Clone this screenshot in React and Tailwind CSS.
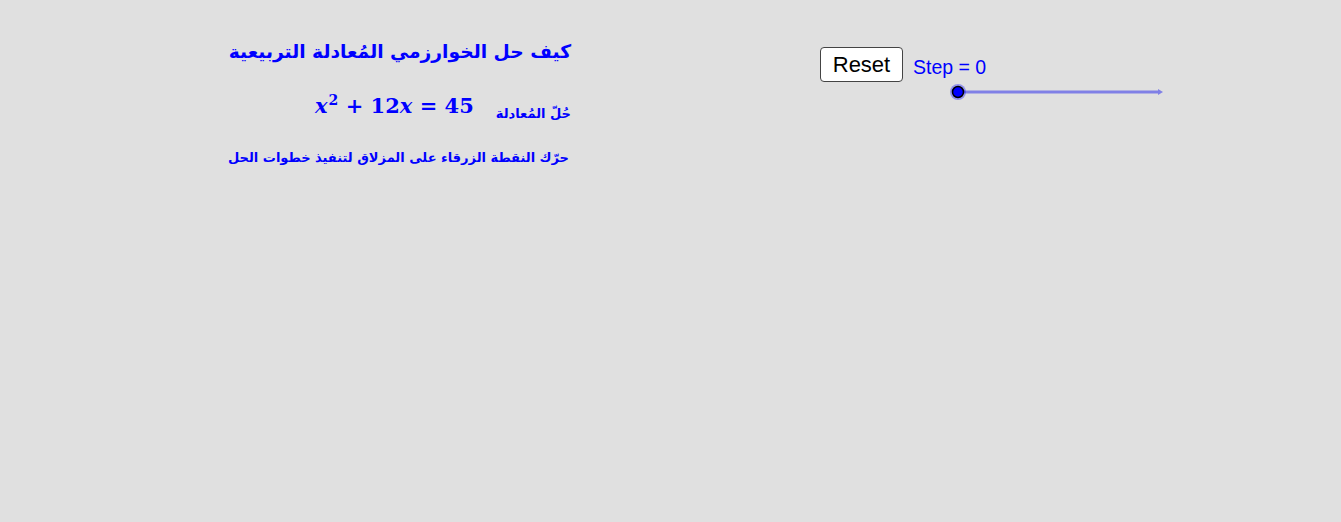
import React from "react";

export default function App() {
  const ar = { fontFamily: '"DejaVu Sans", "Liberation Sans", Arial, sans-serif' };
  const math = { fontFamily: '"DejaVu Serif", "Liberation Serif", serif' };
  return (
    <div className="w-[1341px] h-[522px] bg-[#e0e0e0] flex overflow-hidden">
      <div className="ml-[228px] w-[343px] flex flex-col items-start pt-[38px] text-[#0000ff]" dir="rtl">
        <div className="text-[18.7px] font-bold leading-[28px] whitespace-nowrap" style={ar}>
          كيف حل الخوارزمي المُعادلة التربيعية
        </div>
        <div className="flex items-end mt-[26px] gap-[22px]">
          <div className="text-[13px] font-bold leading-[20px] whitespace-nowrap mb-[-4px]" style={ar}>
            حُلّ المُعادلة
          </div>
          <div dir="ltr" className="text-[21px] font-bold leading-[28px] whitespace-nowrap" style={math}>
            <i>x</i><sup className="text-[14px] relative -top-[8px] ml-[1px]">2</sup> + 12<i>x</i> = 45
          </div>
        </div>
        <div className="text-[13px] font-bold leading-[22px] whitespace-nowrap mt-[27px] mr-[2px]" style={ar}>
          حرّك النقطة الزرقاء على المزلاق لتنفيذ خطوات الحل
        </div>
      </div>
      <div className="ml-[249px] pt-[47px] flex items-start">
        <button
          className="w-[83px] h-[35px] bg-white border border-[#444] rounded-[4px] text-[22px] text-black leading-none flex items-center justify-center"
          style={{ fontFamily: '"Liberation Sans", Arial, sans-serif' }}
        >
          Reset
        </button>
        <div className="ml-[10px] flex flex-col">
          <div
            className="text-[19.5px] text-[#0000ff] leading-[22px] mt-[9px]"
            style={{ fontFamily: '"Liberation Sans", Arial, sans-serif' }}
          >
            Step = 0
          </div>
          <svg width="262" height="20" className="-ml-[4px] mt-[3px]" viewBox="0 0 262 20">
            <line x1="49" y1="11" x2="250" y2="11" stroke="#8080e6" strokeWidth="3" />
            <polygon points="249,8 254,11 249,14" fill="#8080e6" />
            <circle cx="49" cy="11" r="8" fill="#0000ff" opacity="0.35" />
            <circle cx="49" cy="11" r="5.5" fill="#0000ff" stroke="#000" strokeWidth="1.5" />
          </svg>
        </div>
      </div>
    </div>
  );
}
